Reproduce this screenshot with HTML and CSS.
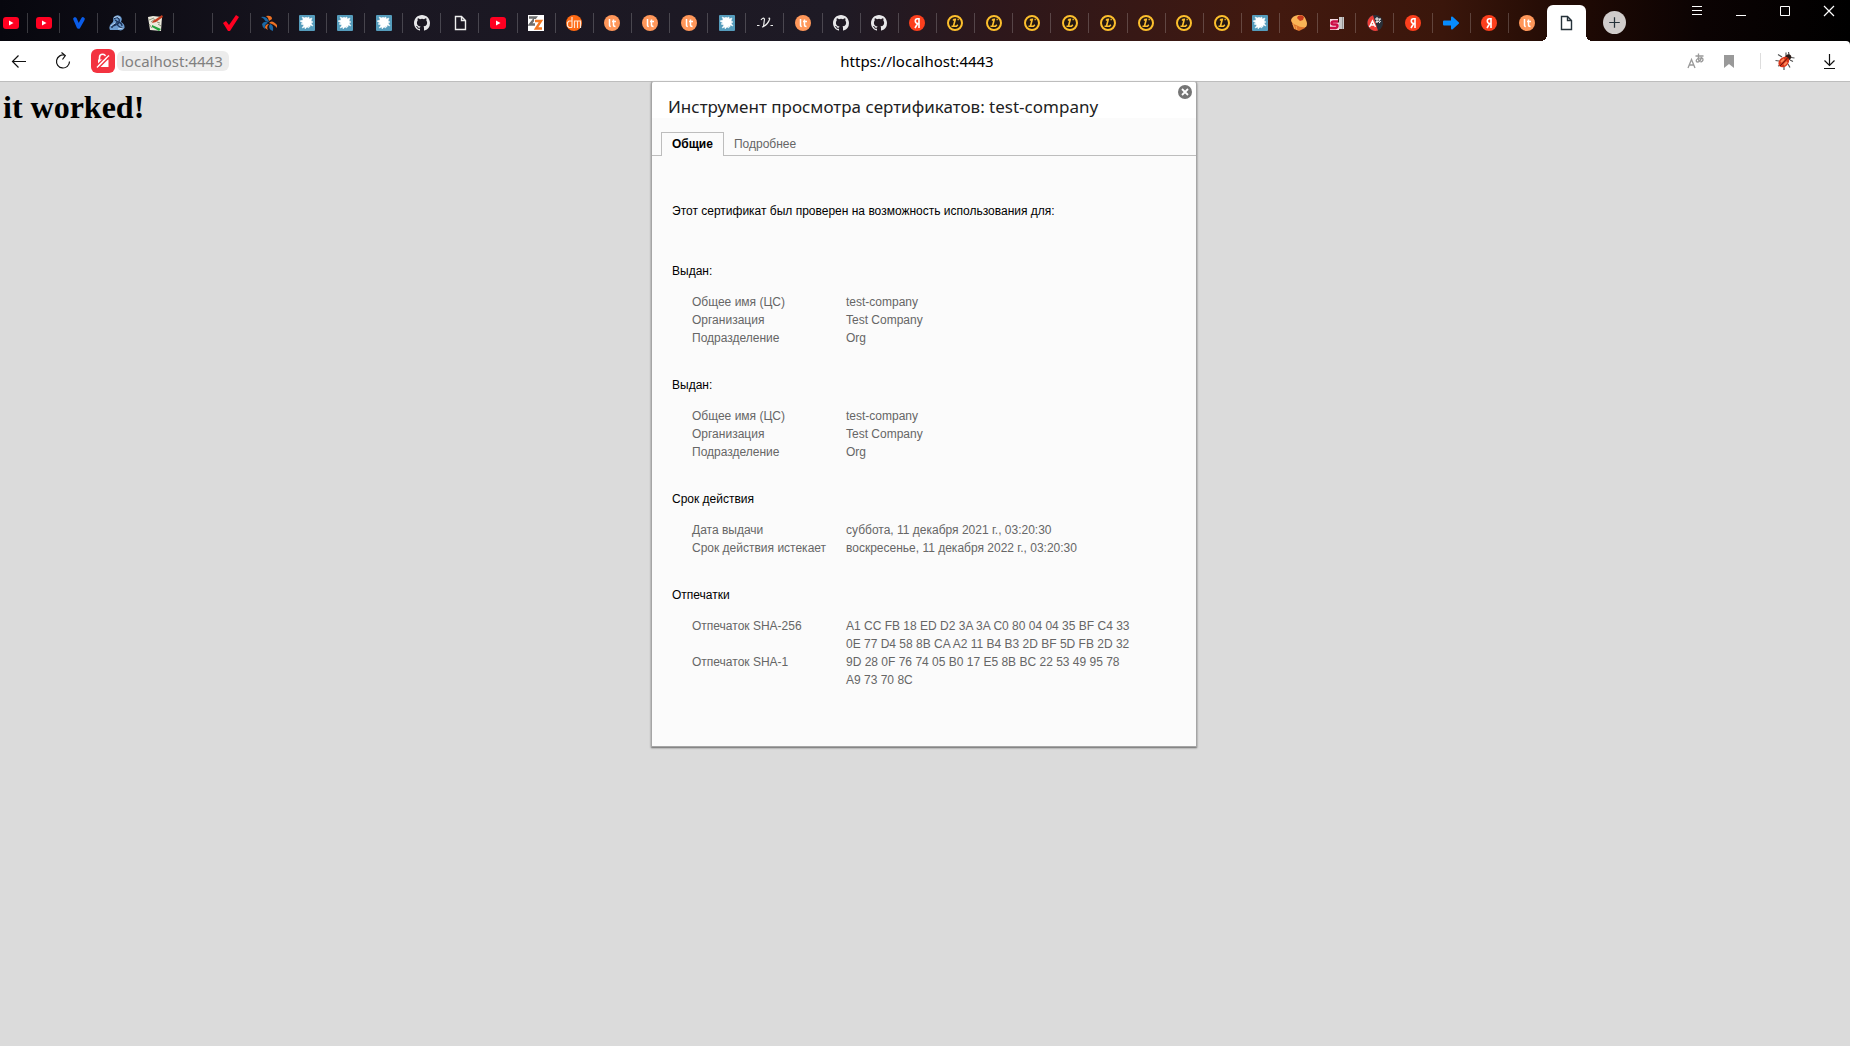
FILE: index.html
```html
<!DOCTYPE html>
<html lang="ru">
<head>
<meta charset="utf-8">
<title>https://localhost:4443</title>
<link rel="stylesheet" href="styles.css">
<script src="tabs.js" defer></script>
</head>
<body>
<svg class="sprite" aria-hidden="true">
  <symbol id="yt" viewBox="0 0 16 16"><rect y="2" width="16" height="12" rx="3" fill="#ff0021"/><path d="M6 5.500v5l4.500-2.500z" fill="#fff"/></symbol>
  <symbol id="vee" viewBox="0 0 16 16"><path d="M4 4l3.500 8L12 4" fill="none" stroke="#0a5ce8" stroke-width="3.600" stroke-linecap="round" stroke-linejoin="round"/></symbol>
  <symbol id="knot" viewBox="0 0 16 16"><path d="M4 3Q7-1 11 1q3 2 1 6 4 2 3.500 6-2 3.500-6 2H1q-2-4 2-7 2-1 1-5z" fill="#6e9dd0"/><path d="M5 4q3-3 5 0 1 2-1 5l-7 3M8 6q-1 4 3 6l3 1M7 9q-4 1-4 4M6 5l3 2q4 1 4 4" fill="none" stroke="#1b3258" stroke-width="1.300"/><path d="M5 2.500q4-2 6 .5M2 11l4-3M9 14l5-1" fill="none" stroke="#bcd8f3"/></symbol>
  <symbol id="board" viewBox="0 0 16 16"><path d="M1 2l5-1 9 1-1 14-11-1z" fill="#ece9dc"/><path d="M2 5l5-2M4 7l4-3M2 9l3 4M11 9l3 2M10 7l3 1" stroke="#8d967c" fill="none"/><path d="M15 0l1 2-7 5-4 1 1-2z" fill="#c23d20"/><path d="M5 10l9 4-2 2-7-4z" fill="#23a23d"/></symbol>
  <symbol id="check" viewBox="0 0 16 16"><path d="M0 8l3-2 3 4 7-10 3 2L7 16H5z" fill="#ff0021"/></symbol>
  <symbol id="swirl" viewBox="0 0 16 16"><g fill="#1b68a5"><path d="M0 2q6-1 8 5-4 0-5-3z"/><path d="M1 9q3-4 6-1-4 1-3 6-3-2-3-5z"/><path d="M9 9q4 1 3 7-4-1-4-5z"/></g><g fill="#ee7224"><path d="M5 1q6-1 6 3L8 6Q8 3 5 1z"/><path d="M8 8q3-4 8 2v3q-3-4-8-5z"/><path d="M4 13q0-4 4-4-3 3-1 6z"/></g></symbol>
  <symbol id="splat" viewBox="0 0 16 16"><rect width="16" height="16" rx="1" fill="#559cbc"/><path d="M4 4l-1-2 3 1 1-1 1 1 2-1v2l3-1-1 3 2 1-2 1 2 3-3-1v2l-2-1 1 2-2-1-2 2v-2l-3 1 2-3-3-1 2-1-3-2 3-1z" fill="#fff" stroke="#fff" stroke-width=".5"/></symbol>
  <symbol id="gh" viewBox="0 0 16 16"><path fill="#e8e8ea" d="M8 0C3.580 0 0 3.580 0 8c0 3.540 2.290 6.530 5.470 7.590.4.070.55-.17.55-.38 0-.19-.01-.82-.01-1.490-2.010.37-2.530-.49-2.690-.94-.09-.23-.48-.94-.82-1.130-.28-.15-.68-.52-.01-.53.63-.01 1.080.58 1.230.82.72 1.210 1.870.87 2.330.66.07-.52.28-.87.51-1.070-1.780-.2-3.640-.89-3.640-3.950 0-.87.31-1.590.82-2.150-.08-.2-.36-1.020.08-2.120 0 0 .67-.21 2.200.82a7.600 7.600 0 0 1 4 0c1.530-1.040 2.200-.82 2.200-.82.44 1.100.16 1.920.08 2.120.51.56.82 1.270.82 2.150 0 3.070-1.870 3.750-3.650 3.950.29.25.54.73.54 1.480 0 1.070-.01 1.930-.01 2.200 0 .21.15.46.55.38A8 8 0 0 0 16 8c0-4.420-3.580-8-8-8z"/></symbol>
  <symbol id="doc" viewBox="0 0 16 16"><path d="M3.500 1.500h6l4 4v9h-10z M9.500 1.500v4h4" fill="none" stroke="currentColor" stroke-width="1.400"/></symbol>
  <symbol id="zz" viewBox="0 0 16 16"><rect width="16" height="16" fill="#fff"/><path d="M1 2.500h6.500L2 9.500h5" fill="none" stroke="#6e6e6e" stroke-width="2.400"/><path d="M6 6h7L8 13.500h6" fill="none" stroke="#fff" stroke-width="4"/><path d="M7 6h6L8 13.500h6" fill="none" stroke="#f47721" stroke-width="2.400"/></symbol>
  <symbol id="dm" viewBox="0 0 16 16"><circle cx="8" cy="8" r="8" fill="#ff6a13"/><path d="M6 2v10.500M6 6H3L1.500 7.500V11L3 12.500H6M8.500 13V6H14.500v7M11.500 6v7" fill="none" stroke="#ffe4d0" stroke-width="1.200"/></symbol>
  <symbol id="lt" viewBox="0 0 16 16"><circle cx="8" cy="8" r="8" fill="#ff975a"/><path d="M5.500 4v6.500q0 1 1.300 1M9.500 4.500v5.500q0 1.500 2 1.500M8 6.500h4" fill="none" stroke="#fff" stroke-width="1.500"/></symbol>
  <symbol id="script" viewBox="0 0 16 16"><path d="M0 10.500h2.500M13.500 10.500H16" stroke="#eee" stroke-width="1.200"/><path d="M4 5Q6 2 7.500 4L6.500 11.500Q11 9 12.500 4.500q.5-2-1-1M5 12l2-.5" fill="none" stroke="#eee" stroke-width="1.200"/></symbol>
  <symbol id="ya" viewBox="0 0 16 16"><circle cx="8" cy="8" r="8" fill="#fc3f1d"/><path d="M10 3v10M10 3.700H8.500Q6.300 3.700 6.300 6T8.700 8.500H10M8.700 8.500L6 13" fill="none" stroke="#fff" stroke-width="1.600"/></symbol>
  <symbol id="el" viewBox="0 0 16 16"><circle cx="8" cy="8" r="7" fill="#231713" stroke="#fdbf2d" stroke-width="2"/><path d="M8.500 3.500L6.500 11M4.500 11.300H9.500l1.300-1.500M6 5.500l1.500-1.500M10.500 4.500h1.300" fill="none" stroke="#fdbf2d" stroke-width="1.600"/></symbol>
  <symbol id="muffin" viewBox="0 0 16 16"><path d="M0 5l6 5 9-1-1 4-6 3-5-2z" fill="#dd742c"/><path d="M0 5Q1 1 7 0q6-1 8 5 2 4 0 7-5 1-10-2Q1 9 0 5z" fill="#f9b456"/><path d="M7 1q4-2 6 1l-1 3-3 1-3-3z" fill="#c83b1d"/><path d="M2 9l2 5M5 11l1 4" stroke="#f4a650"/></symbol>
  <symbol id="sl" viewBox="0 0 16 16"><path d="M10 2h5v12h-5z" fill="#c9c9c9"/><path d="M13.500 2v12" stroke="#979797"/><path d="M9 6H3v3.500h5V13H1" fill="none" stroke="#f5d9e2" stroke-width="4"/><path d="M9 6.500H4.500q-2 0-2 1.500t2 1.500H7q1.500 0 1.500 1.500T6.500 13H1" fill="none" stroke="#cc0c46" stroke-width="2.400"/></symbol>
  <symbol id="translate" viewBox="0 0 16 16"><circle cx="8" cy="8" r="8" fill="#293039"/><path d="M6 0.300A8 8 0 1 0 11 15.500z" fill="#ee3e38"/><path d="M2.500 12L5.500 6 8.500 12M3.500 10h4" fill="none" stroke="#fff" stroke-width="1.500"/><path d="M8 4h6M10 2v6M8.500 7q4 .5 4.500-3M13 6q1 1-1 2" fill="none" stroke="#fff"/></symbol>
  <symbol id="arrow" viewBox="0 0 16 16"><path d="M1 6.500h8V2.500L15 8l-6 5.500v-4H1z" fill="#078cff" stroke="#078cff" stroke-width="2" stroke-linejoin="round"/></symbol>
</svg>

<header>
  <div class="strip">
    <nav class="tabs" id="tabs" aria-label="Вкладки"></nav>
    <button class="new-tab" aria-label="Новая вкладка"><svg viewBox="0 0 24 24"><path d="M12 6.500v11M6.500 12h11" fill="none" stroke="#26323a" stroke-width="1.300"/></svg></button>
    <div class="window">
      <button aria-label="Меню"><svg viewBox="0 0 16 16"><path d="M3 3.500h10M3 7.500h10M3 11.500h10" stroke="#fff"/></svg></button>
      <button aria-label="Свернуть"><svg viewBox="0 0 16 16"><path d="M3 12.500h10" stroke="#fff"/></svg></button>
      <button aria-label="Развернуть"><svg viewBox="0 0 16 16"><path d="M3.500 3.500h9v9h-9z" fill="none" stroke="#fff"/></svg></button>
      <button aria-label="Закрыть"><svg viewBox="0 0 16 16"><path d="M3 3l10 10M13 3L3 13" stroke="#fff" stroke-width="1.200"/></svg></button>
    </div>
  </div>
  <div class="toolbar">
    <div class="side">
      <button class="tool back" aria-label="Назад"><svg viewBox="0 0 18 18"><path d="M16 9.500H2.500M8.500 3.500L2.500 9.500l6 6" fill="none" stroke="#111" stroke-width="1.200"/></svg></button>
      <button class="tool reload" aria-label="Обновить"><svg viewBox="0 0 18 18"><path d="M11 3.300A6.500 6.500 0 1 0 15.500 9.500M7.500.5L11.300 3.500 8.500 7.500" fill="none" stroke="#111" stroke-width="1.200"/></svg></button>
      <button class="lock" aria-label="Небезопасное соединение"><svg viewBox="0 0 24 24"><path d="M8.500 11V8.500a3.200 3.200 0 0 1 6.400 0V11" fill="none" stroke="#fff" stroke-width="1.600"/><path d="M7 10.500h10.500V18H7z" fill="#fff"/><path d="M5.500 17L16.500 6" stroke="#f33340" stroke-width="1.600"/><path d="M6 18.500L18 6.500" stroke="#fff" stroke-width="1.600"/><path d="M7.500 19L18.500 8" stroke="#f33340" stroke-width="1.400"/></svg></button>
      <a class="host" href="#">localhost:4443</a>
    </div>
    <div class="url">https://localhost:4443</div>
    <div class="side end">
      <button class="tool" aria-label="Перевести"><svg viewBox="0 0 18 18"><path d="M1 16L4.500 7.500 8 16M2.200 13h4.600M8.500 4h8M11.500 1.500q-.5 5 .5 8M14.500 5q-1 5-4.500 5-2-1.500 1-3.500 5-1.500 5 1 0 2-2.500 2.500" fill="none" stroke="#999" stroke-width="1.300"/></svg></button>
      <button class="tool mark" aria-label="В закладки"><svg viewBox="0 0 18 18"><path d="M4 3h10v13l-5-4-5 4z" fill="#999"/></svg></button>
      <span class="rule"></span>
      <button class="tool bug" aria-label="Расширение"><svg viewBox="0 0 20 20"><path d="M7 6L3 3.500M4 10L.5 9.500M6 14l-3 1M9 16l0 3M13 13l2 3.500M15 9l3 1.500M11 5L11 1.500M14 4l-.5-3M16 6.500l3.500.5" fill="none" stroke="#555" stroke-width="1.200"/><ellipse cx="13" cy="6.500" rx="2.800" ry="3.500" transform="rotate(45 13 6.500)" fill="#2b1a17"/><ellipse cx="8.800" cy="11" rx="6" ry="4.600" transform="rotate(-45 8.800 11)" fill="#d9361a"/><path d="M13 6.500L5 15" stroke="#60150b"/><path d="M6 11l3-3M9 14l3-3" stroke="#ff8a5c" stroke-width="1.800"/></svg></button>
      <button class="tool" aria-label="Загрузки"><svg viewBox="0 0 18 18"><path d="M9.500 2v11M4.500 8.500l5 5 5-5M4 16.500h11" fill="none" stroke="#111" stroke-width="1.200"/></svg></button>
    </div>
  </div>
</header>

<main>
  <h1>it worked!</h1>
  <section class="dialog" role="dialog" aria-labelledby="title">
    <div class="title-bar">
      <h2 id="title">Инструмент просмотра сертификатов: test-company</h2>
      <button class="close" aria-label="Закрыть"><svg viewBox="0 0 14 14"><circle cx="7" cy="7" r="7" fill="#757575"/><path d="M4 4l6 6M10 4l-6 6" stroke="#fff" stroke-width="1.800"/></svg></button>
    </div>
    <div class="pages" role="tablist">
      <button class="page on" role="tab" aria-selected="true">Общие</button>
      <button class="page" role="tab" aria-selected="false">Подробнее</button>
    </div>
    <div class="content">
      <p>Этот сертификат был проверен на возможность использования для:</p>
      <h3>Выдан:</h3>
      <table>
        <tr><th scope="row">Общее имя (ЦС)</th><td>test-company</td></tr>
        <tr><th scope="row">Организация</th><td>Test Company</td></tr>
        <tr><th scope="row">Подразделение</th><td>Org</td></tr>
      </table>
      <h3>Выдан:</h3>
      <table>
        <tr><th scope="row">Общее имя (ЦС)</th><td>test-company</td></tr>
        <tr><th scope="row">Организация</th><td>Test Company</td></tr>
        <tr><th scope="row">Подразделение</th><td>Org</td></tr>
      </table>
      <h3>Срок действия</h3>
      <table>
        <tr><th scope="row">Дата выдачи</th><td>суббота, 11 декабря 2021 г., 03:20:30</td></tr>
        <tr><th scope="row">Срок действия истекает</th><td>воскресенье, 11 декабря 2022 г., 03:20:30</td></tr>
      </table>
      <h3>Отпечатки</h3>
      <table>
        <tr><th scope="row">Отпечаток SHA-256</th><td>A1 CC FB 18 ED D2 3A 3A C0 80 04 04 35 BF C4 33 0E 77 D4 58 8B CA A2 11 B4 B3 2D BF 5D FB 2D 32</td></tr>
        <tr><th scope="row">Отпечаток SHA-1</th><td>9D 28 0F 76 74 05 B0 17 E5 8B BC 22 53 49 95 78 A9 73 70 8C</td></tr>
      </table>
    </div>
  </section>
</main>
</body>
</html>
```
FILE: tabs.js
```
const icons = ('yt yt vee knot board none check swirl splat splat splat gh doc yt zz dm lt lt lt splat script lt ' +
  'gh gh ya el el el el el el el el splat muffin sl translate ya arrow ya lt doc').split(' ');
document.getElementById('tabs').innerHTML = icons.map((name, i) => {
  const kind = i === 0 ? ' cut' : i === 1 ? ' narrow' : i === icons.length - 1 ? ' active' : '';
  const icon = name === 'none' ? '' : `<svg><use href="#${name}"/></svg>`;
  return `<button class="tab${kind}" aria-label="Вкладка ${i + 1}">${icon}</button>`;
}).join('');
```
FILE: styles.css
```css
* { box-sizing: border-box; }
body { margin: 0; min-height: 100vh; display: flex; flex-direction: column; background: #dbdbdb; color: #000; }
button { margin: 0; padding: 0; border: 0; background: none; font: inherit; color: inherit; }
svg { display: block; width: 16px; height: 16px; }
.sprite { position: absolute; width: 0; height: 0; }

header { background: #000; }
.strip { display: flex; height: 41px; background: linear-gradient(90deg, #07070e 0, #1a1722 20%, #1e1a25 45%, #2d171b 54%, #42190f 69%, #3a160b 78%, #200a04 85%, #0b0303 92%, #000 100%); }
.tabs { display: flex; flex: 1; min-width: 0; }
.tab { flex: 1 1 0; min-width: 0; display: flex; align-items: center; justify-content: center; height: 20px; margin-top: 13px; border-right: 1px solid #ffffff33; color: #eee; }
.tab.cut { flex: 0 0 28px; justify-content: flex-start; padding-left: 3px; }
.tab.narrow { flex: 0 0 32px; }
.tab:nth-last-child(2) { border-color: transparent; }
.tab.active { position: relative; flex: 0 0 39px; height: 36px; margin-top: 5px; background: #fff; border: 0; border-radius: 6px 6px 0 0; color: #26323a; }
.tab.active::before, .tab.active::after { content: ""; position: absolute; bottom: 0; width: 6px; height: 6px; }
.tab.active::before { right: 100%; background: radial-gradient(circle at 0 0, transparent 6px, #fff 6px); }
.tab.active::after { left: 100%; background: radial-gradient(circle at 100% 0, transparent 6px, #fff 6px); }
.new-tab { width: 23px; height: 23px; margin: 11px 59px 0 17px; border-radius: 50%; background: #d0cccb; }
.new-tab svg { width: 23px; height: 23px; }
.window { display: flex; gap: 28px; height: 16px; margin: 3px 13px 0 4px; }

.toolbar { display: flex; align-items: center; height: 41px; background: #fff; border-bottom: 1px solid #bdbdbd; border-top-right-radius: 4px; font: 15px/20px "Noto Sans", sans-serif; }
.side { flex: 1 1 0; display: flex; align-items: center; }
.end { justify-content: flex-end; padding-right: 12px; }
.tool svg { width: 18px; height: 18px; }
.back { margin-left: 10px; }
.reload { margin-left: 26px; }
.lock { margin-left: 19px; border-radius: 6px; background: #f33340; }
.lock svg { width: 24px; height: 24px; }
.host { margin-left: 2px; padding: 0 6px 0 4px; border-radius: 6px; background: #ececec; color: #808080; text-decoration: none; }
.url { padding-right: 4px; }
.mark { margin-left: 15px; }
.rule { width: 1px; height: 16px; margin: 0 14px 0 22px; background: #ddd; }
.bug { margin-right: 25px; }
.bug svg { width: 20px; height: 20px; }

main { position: relative; flex: 1; }
h1 { margin: 0; padding: 6px 3px; font: bold 32px/38px "Liberation Serif", serif; }
.dialog { position: absolute; top: -1px; left: 50%; width: 546px; margin-left: -274px; border: 1px solid #a5a5a5; border-top-color: #bdbdbd; border-radius: 3px 3px 0 0; background: #fbfbfb; box-shadow: 0 1px 2px #0008; font: 12px/18px "Liberation Sans", sans-serif; }
.title-bar { display: flex; justify-content: space-between; height: 36px; padding: 0 4px 0 16px; background: #fff; border-radius: 3px 3px 0 0; }
h2 { margin: 0; padding-top: 12px; font: 17px/26px "Noto Sans", sans-serif; color: #222; white-space: nowrap; }
.close { align-self: flex-start; margin-top: 3px; }
.close svg { width: 14px; height: 14px; }
.pages { display: flex; height: 38px; padding: 14px 9px 0; border-bottom: 1px solid #bdbdbd; }
.page { height: 23px; padding: 0 10px; color: #666; }
.page.on { height: 24px; padding-bottom: 2px; background: #fbfbfb; border: 1px solid #bdbdbd; border-bottom: 0; color: #000; font-weight: bold; }
.content { padding: 46px 19px 57px 20px; }
p { margin: 0 0 42px; }
h3 { margin: 0 0 13px; font: inherit; }
table { margin: 0 0 29px 20px; border-collapse: collapse; table-layout: fixed; width: 444px; color: #666; }
table:last-child { margin-bottom: 0; }
th, td { padding: 0; font-weight: normal; text-align: left; vertical-align: top; }
th { width: 154px; }
```
